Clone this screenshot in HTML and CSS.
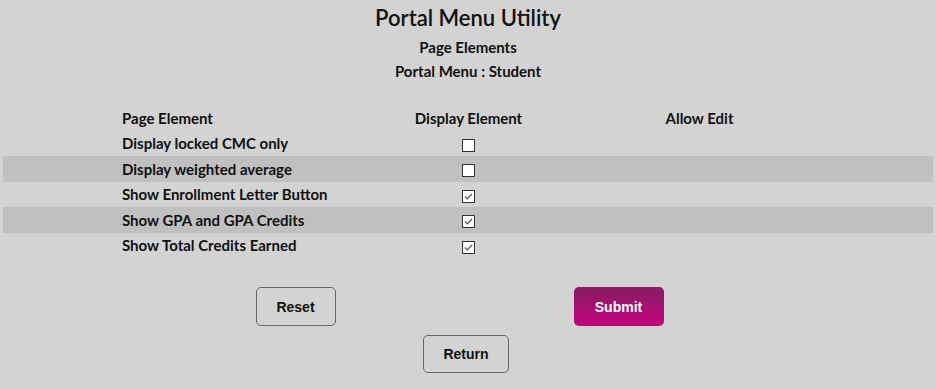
FILE: index.html
```html
<!DOCTYPE html>
<html>
<head lang="en">
    <meta charset="UTF-8">
    <title>Portal Menu Utility</title>
    <link rel="stylesheet" href="styles.css">
</head>
<body>
<div id="page">
    <h1 class="title">Portal Menu Utility</h1>
    <h2 class="subtitle">Page Elements</h2>
    <h2 class="subtitle">Portal Menu : Student</h2>

    <div class="grid">
        <div class="row head">
            <div class="cell name">Page Element</div>
            <div class="cell">Display Element</div>
            <div class="cell">Allow Edit</div>
        </div>
        <div class="row">
            <div class="cell name">Display locked CMC only</div>
            <div class="cell"><span class="box"></span></div>
            <div class="cell"></div>
        </div>
        <div class="row alt">
            <div class="cell name">Display weighted average</div>
            <div class="cell"><span class="box"></span></div>
            <div class="cell"></div>
        </div>
        <div class="row">
            <div class="cell name">Show Enrollment Letter Button</div>
            <div class="cell"><span class="box checked"><svg viewBox="0 0 11 11"><path d="M2 5.5 L4.3 7.8 L9 3" /></svg></span></div>
            <div class="cell"></div>
        </div>
        <div class="row alt">
            <div class="cell name">Show GPA and GPA Credits</div>
            <div class="cell"><span class="box checked"><svg viewBox="0 0 11 11"><path d="M2 5.5 L4.3 7.8 L9 3" /></svg></span></div>
            <div class="cell"></div>
        </div>
        <div class="row">
            <div class="cell name">Show Total Credits Earned</div>
            <div class="cell"><span class="box checked"><svg viewBox="0 0 11 11"><path d="M2 5.5 L4.3 7.8 L9 3" /></svg></span></div>
            <div class="cell"></div>
        </div>
    </div>

    <div class="actions">
        <button class="btn reset">Reset</button>
        <button class="btn submit">Submit</button>
    </div>
    <div class="actions single">
        <button class="btn return">Return</button>
    </div>
</div>
</body>
</html>
```

FILE: styles.css
```css
* {
    margin: 0;
    padding: 0;
    box-sizing: border-box;
}

html, body {
    background: #d3d3d3;
}

body {
    font-family: Lato, "Open Sans", sans-serif;
    color: #111;
}

#page {
    width: 930px;
    margin: 0 3px;
    padding-top: 5px;
}

.title {
    text-align: center;
    font-size: 22px;
    font-weight: 600;
    line-height: 26px;
}

.subtitle {
    text-align: center;
    font-size: 15px;
    font-weight: 700;
    line-height: 16px;
    margin-top: 8px;
}

.grid {
    margin-top: 26px;
}

.row {
    display: grid;
    grid-template-columns: 231px 231px 231px;
    padding: 0 118px 0 119px;
    height: 25.5px;
    align-items: center;
    font-size: 15px;
    font-weight: 700;
}

.row.alt {
    background: #c0c0c0;
}

.cell {
    text-align: center;
}

.cell.name {
    text-align: left;
}

.box {
    display: inline-block;
    width: 13px;
    height: 13px;
    border: 1px solid #333;
    background: #fff;
    vertical-align: middle;
}

.box svg {
    display: block;
    width: 11px;
    height: 11px;
}

.box svg path {
    fill: none;
    stroke: #555;
    stroke-width: 1.2;
}

.actions {
    display: flex;
    justify-content: center;
    gap: 238px;
    padding-right: 17px;
    margin-top: 29px;
}

.actions.single {
    padding-right: 4px;
    margin-top: 9px;
}

.btn {
    font-family: "Liberation Sans", Arial, sans-serif;
    font-size: 14px;
    font-weight: 700;
    height: 39px;
    border: 1px solid #666;
    border-radius: 5px;
    background: transparent;
    color: #111;
}

.reset {
    width: 80px;
}

.submit {
    width: 90px;
    border: none;
    color: #fff;
    background: linear-gradient(#861d63, #c3047f);
}

.return {
    width: 86px;
    height: 38px;
}
```
